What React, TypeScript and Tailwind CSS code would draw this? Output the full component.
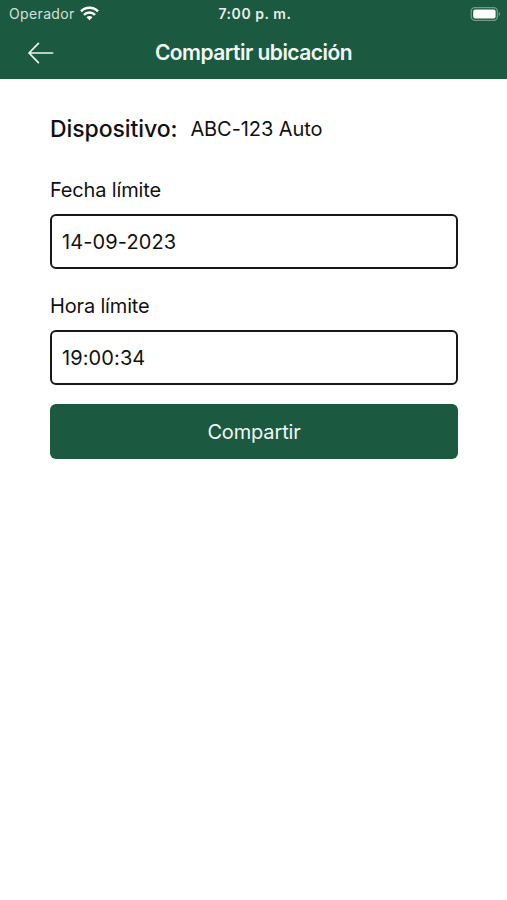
import { useState } from 'react'

export default function App() {
  const [date, setDate] = useState('14-09-2023')
  const [time, setTime] = useState('19:00:34')

  return (
    <div className="min-h-screen bg-white font-['Inter',sans-serif] text-[#111111]">
      <header className="h-[79px] bg-[#1b5940] text-white">
        <div className="grid h-[27px] grid-cols-3 items-center pl-[9px] pr-[6px]">
          <div className="flex items-center gap-[5px] text-[14px] text-[#d5e0da]">
            <span className="tracking-[0.36px]">Operador</span>
            <svg width="19" height="15" viewBox="0 0 19 15" fill="none" stroke="white" strokeWidth="2.5">
              <path d="M1 5.4a12 12 0 0 1 17 0" />
              <path d="M4 8.8a7.7 7.7 0 0 1 11 0" />
              <path d="M9.5 14.3 6.5 11.2a4.2 4.2 0 0 1 6 0z" fill="white" stroke="none" />
            </svg>
          </div>
          <span className="text-center text-[14px] font-semibold tracking-[0.55px] text-[#e8efeb]">7:00 p. m.</span>
          <svg className="justify-self-end" width="31" height="14" viewBox="0 0 31 14">
            <rect x="1.2" y="0.7" width="26.2" height="12.6" rx="3.8" fill="none" stroke="#76998a" strokeWidth="1.3" />
            <rect x="3.2" y="2.4" width="22.4" height="9.2" rx="2" fill="white" />
            <path d="M28.8 4.7a2.6 2.6 0 0 1 0 4.6z" fill="#76998a" />
          </svg>
        </div>
        <div className="grid h-[52px] grid-cols-[100px_1fr_100px] items-center">
          <button className="pl-7" aria-label="Atrás">
            <svg width="26" height="22" viewBox="0 0 26 22" fill="none" stroke="#eef4f0" strokeWidth="1.7" strokeLinecap="round" strokeLinejoin="round">
              <path d="M10.4 1.4 1 11l9.4 9.6M1 11h23.6" />
            </svg>
          </button>
          <h1 className="text-center text-[21px] font-semibold tracking-[-0.52px] text-[#f1f7f3]">Compartir ubicación</h1>
        </div>
      </header>

      <main className="px-[50px] pt-[34px]">
        <div className="flex h-8 items-center gap-[13px]">
          <span className="text-[23px] font-medium tracking-[-0.08px]">Dispositivo:</span>
          <span className="text-[20px] tracking-[-0.08px]">ABC-123 Auto</span>
        </div>

        <form onSubmit={(e) => e.preventDefault()}>
          <label className="mt-[30px] block h-[30px] text-[20px] leading-[30px] tracking-[-0.16px]" htmlFor="date">
            Fecha límite
          </label>
          <input
            id="date"
            value={date}
            onChange={(e) => setDate(e.target.value)}
            className="mt-[9px] block h-[55px] w-[408px] rounded-md border-2 border-[#181818] px-[10px] text-[20px] tracking-[0.1px]"
          />
          <label className="mt-[22px] block h-[30px] text-[20px] leading-[30px] tracking-[-0.16px]" htmlFor="time">
            Hora límite
          </label>
          <input
            id="time"
            value={time}
            onChange={(e) => setTime(e.target.value)}
            className="mt-[9px] block h-[55px] w-[408px] rounded-md border-2 border-[#181818] px-[10px] text-[20px] tracking-[0.1px]"
          />
          <button className="mt-[19px] block h-[55px] w-[408px] rounded-md bg-[#1b5940] text-[20px] tracking-[-0.15px] text-[#f1f7f3]">
            Compartir
          </button>
        </form>
      </main>
    </div>
  )
}
